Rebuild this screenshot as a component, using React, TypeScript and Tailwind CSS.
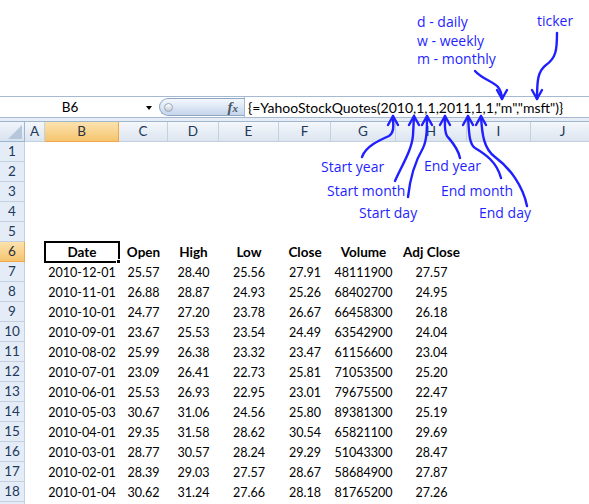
import React from 'react';

const columns = [
  { id: 'A', w: 'w-[20px]' },
  { id: 'B', w: 'w-[74px]' },
  { id: 'C', w: 'w-[49px]' },
  { id: 'D', w: 'w-[51px]' },
  { id: 'E', w: 'w-[60px]' },
  { id: 'F', w: 'w-[52px]' },
  { id: 'G', w: 'w-[65px]' },
  { id: 'H', w: 'w-[71px]' },
  { id: 'I', w: 'w-[64px]' },
  { id: 'J', w: 'w-[64px]' },
];

const headings = ['Date', 'Open', 'High', 'Low', 'Close', 'Volume', 'Adj Close'];

const quotes = [
  ['2010-12-01', '25.57', '28.40', '25.56', '27.91', '48111900', '27.57'],
  ['2010-11-01', '26.88', '28.87', '24.93', '25.26', '68402700', '24.95'],
  ['2010-10-01', '24.77', '27.20', '23.78', '26.67', '66458300', '26.18'],
  ['2010-09-01', '23.67', '25.53', '23.54', '24.49', '63542900', '24.04'],
  ['2010-08-02', '25.99', '26.38', '23.32', '23.47', '61156600', '23.04'],
  ['2010-07-01', '23.09', '26.41', '22.73', '25.81', '71053500', '25.20'],
  ['2010-06-01', '25.53', '26.93', '22.95', '23.01', '79675500', '22.47'],
  ['2010-05-03', '30.67', '31.06', '24.56', '25.80', '89381300', '25.19'],
  ['2010-04-01', '29.35', '31.58', '28.62', '30.54', '65821100', '29.69'],
  ['2010-03-01', '28.77', '30.57', '28.24', '29.29', '51043300', '28.47'],
  ['2010-02-01', '28.39', '29.03', '27.57', '28.67', '58684900', '27.87'],
  ['2010-01-04', '30.62', '31.24', '27.66', '28.18', '81765200', '27.26'],
];

const rowNumbers = Array.from({ length: 19 }, (_, i) => i + 1);

// blue pen annotations drawn on top of the sheet
const Annotations = () => {
  const pen = { stroke: '#1f1fff', strokeWidth: 2.4, fill: 'none', strokeLinecap: 'round' as const, strokeLinejoin: 'round' as const };
  const up = (x: number, y: number) => `M${x - 5} ${y + 9} L${x} ${y} L${x + 5} ${y + 9}`;
  const down = (x: number, y: number) => `M${x - 5} ${y - 9} L${x} ${y} L${x + 5} ${y - 9}`;
  return (
    <svg
      className="pointer-events-none absolute left-0 top-0 font-['Open_Sans',sans-serif]"
      width={589}
      height={504}
      viewBox="0 0 589 504"
    >
      <g fill="#1f1fff" fontSize={14}>
        <text x={417} y={27}>d - daily</text>
        <text x={417} y={46}>w - weekly</text>
        <text x={417} y={64}>m - monthly</text>
        <text x={537} y={26}>ticker</text>
        <text x={321} y={172}>Start year</text>
        <text x={327} y={196}>Start month</text>
        <text x={359} y={218}>Start day</text>
        <text x={424} y={171}>End year</text>
        <text x={441} y={196}>End month</text>
        <text x={479} y={218}>End day</text>
      </g>
      <path {...pen} d="M475 71 C 482 79, 494 82, 498 87 C 501 91, 502 95, 502 99" />
      <path {...pen} d={down(502, 99)} />
      <path {...pen} d="M557 33 C 557 50, 556 58, 546 65 C 538 71, 537 80, 537 99" />
      <path {...pen} d={down(537, 99)} />

      <path {...pen} d="M362 157 C 366 146, 380 140, 389 136 C 395 132, 393 124, 393 116" />
      <path {...pen} d={up(393, 116)} />
      <path {...pen} d="M395 181 C 402 165, 412 150, 413 135 L 414 116" />
      <path {...pen} d={up(414, 116)} />
      <path {...pen} d="M408 197 C 410 178, 416 160, 423 148 C 427 140, 427 128, 427 116" />
      <path {...pen} d={up(427, 116)} />
      <path {...pen} d="M460 158 C 458 148, 452 142, 447 136 C 444 131, 445 124, 445 116" />
      <path {...pen} d={up(445, 116)} />
      <path {...pen} d="M501 178 C 497 162, 485 154, 475 148 C 469 144, 469 132, 468 116" />
      <path {...pen} d={up(468, 116)} />
      <path {...pen} d="M527 206 C 523 186, 510 168, 495 157 C 484 149, 482 135, 481 116" />
      <path {...pen} d={up(481, 116)} />
    </svg>
  );
};

const FormulaBar = () => (
  <div className="flex h-[22px] border-y border-[#a7b9d0] bg-white">
    <div className="relative flex w-[158px] items-center">
      <span className="w-[140px] text-center text-[13.5px] text-black">B6</span>
      <span className="absolute left-[146px] top-[9px] h-0 w-0 border-x-[3.5px] border-t-[4px] border-x-transparent border-t-black" />
    </div>
    <div className="relative my-[1px] ml-[1px] flex w-[85px] items-center rounded-l-full border border-r-0 border-[#8ea6c6] bg-linear-to-b from-[#f4f8fd] via-[#dce7f5] to-[#c4d4ea]">
      <span className="ml-[4px] h-[9px] w-[9px] rounded-full border border-[#9aa9bb] bg-linear-to-b from-[#ffffff] to-[#c3cbd6]" />
      <span className="ml-auto mr-[6px] font-['Liberation_Serif',serif] text-[15px] font-bold italic leading-none text-[#4b5563]">
        f<span className="text-[11px]">x</span>
      </span>
    </div>
    <div className="flex flex-1 items-center whitespace-nowrap border-l border-[#a7b9d0] pl-[3px] text-[14px] text-black">
      {'{=YahooStockQuotes(2010,1,1,2011,1,1,"m","msft")}'}
    </div>
  </div>
);

const ColumnHeaders = () => (
  <div className="flex h-[21px] border-t border-[#9eb6ce]">
    <div className="relative w-[25px] shrink-0 border-r border-b border-[#9eb6ce] bg-linear-to-b from-[#f1f5fb] to-[#d8e2ef]">
      <span className="absolute bottom-[2px] right-[2px] h-0 w-0 border-b-[14px] border-l-[14px] border-b-[#b6c6db] border-l-transparent" />
    </div>
    {columns.map((c) => (
      <div
        key={c.id}
        className={`${c.w} flex shrink-0 items-center justify-center border-r border-b text-[13.5px] ${
          c.id === 'B'
            ? 'border-[#f0a848] bg-linear-to-b from-[#fbe2ad] to-[#f5c56f] text-[#2a3140]'
            : 'border-[#c2d0e0] bg-linear-to-b from-[#f4f7fb] to-[#dce5f0] text-[#23395a]'
        }`}
      >
        {c.id}
      </div>
    ))}
  </div>
);

const Row = ({ n }: { n: number }) => {
  const values = n === 6 ? headings : n >= 7 && n <= 18 ? quotes[n - 7] : [];
  return (
    <div className="flex h-[20px]">
      <div
        className={`flex w-[25px] shrink-0 items-center justify-center border-r border-b text-[13.5px] ${
          n === 6
            ? 'border-[#f0a848] bg-linear-to-b from-[#fbe2ad] to-[#f5c56f] text-[#2a3140]'
            : 'border-[#c2d0e0] bg-[#e4ecf7] text-[#23395a]'
        }`}
      >
        {n < 19 ? n : ''}
      </div>
      {columns.map((c, i) => {
        const v = i >= 1 && i <= 7 ? values[i - 1] : undefined;
        const selected = n === 6 && c.id === 'B';
        return (
          <div
            key={c.id}
            className={`${c.w} relative flex shrink-0 justify-center whitespace-nowrap leading-[21px] text-black ${
              n === 6 ? 'text-[13.5px] font-bold' : 'text-[12.5px]'
            }`}
          >
            {v}
            {selected && (
              <>
                <span className="absolute -left-[1px] -top-[1px] h-[22px] w-[76px] border-2 border-black" />
                <span className="absolute -bottom-[2px] -right-[2px] h-[5px] w-[5px] border border-white bg-black" />
              </>
            )}
          </div>
        );
      })}
    </div>
  );
};

export default function App() {
  return (
    <div className="relative h-[504px] w-[589px] overflow-hidden bg-white font-['Lato',sans-serif]">
      <div className="h-[96px]" />
      <FormulaBar />
      <div className="h-[3px] bg-[#e6edf6]" />
      <ColumnHeaders />
      {rowNumbers.map((n) => (
        <Row key={n} n={n} />
      ))}
      <Annotations />
    </div>
  );
}
